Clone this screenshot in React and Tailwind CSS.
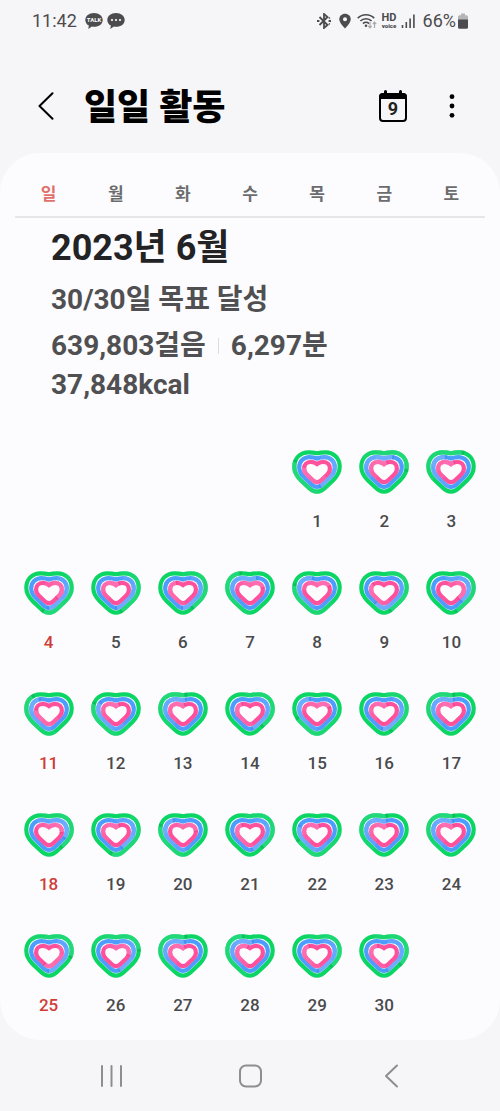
import React, { useState } from 'react';

const WEEKDAYS = ['일', '월', '화', '수', '목', '금', '토'];

// end point of each ring, in percent of the heart outline: [steps, active time, calories]
const ACTIVITY = [
  [80, 46, 78], [25, 8, 4], [8, 94, 4],
  [54, 50, 36], [45, 49, 4], [41, 50, 90], [92, 6, 20], [78, 95, 18], [44, 59, 84], [45, 37, 37],
  [87, 90, 77], [80, 83, 4], [1, 2, 2], [38, 47, 88], [68, 92, 18], [43, 51, 4], [1, 2, 3],
  [38, 30, 24], [53, 43, 4], [79, 90, 22], [38, 47, 88], [67, 80, 3], [1, 2, 4], [1, 1, 3],
  [27, 50, 56], [22, 46, 26], [1, 1, 2], [94, 2, 96], [36, 48, 88], [34, 46, 90],
];

const FIRST_WEEKDAY = 4;

const RINGS = [
  {
    d: 'M25 3.3C28 2.5 31 2.3 33.5 2.3C42 2.3 47.7 8.4 47.7 16.6C47.7 22.4 45.2 26.4 41.2 30.2L34 37C30.8 40.2 28.6 41.7 25 41.7C21.4 41.7 19.2 40.2 16 37L8.8 30.2C4.8 26.4 2.3 22.4 2.3 16.6C2.3 8.4 8 2.3 16.5 2.3C19 2.3 22 2.5 25 3.3Z',
    base: '#0bd563',
    light: '#2bdb83',
    dark: '#08a552',
  },
  {
    d: 'M25 8.5C27.5 7.4 30 7.1 32.3 7.1C38.6 7.1 42.8 11.6 42.8 17.3C42.8 21.3 41 24.3 38.4 26.8L31.2 33.7C29 35.9 27.4 36.9 25 36.9C22.6 36.9 21 35.9 18.8 33.7L11.6 26.8C9 24.3 7.2 21.3 7.2 17.3C7.2 11.6 11.4 7.1 17.7 7.1C20 7.1 22.5 7.4 25 8.5Z',
    base: '#4d9dff',
    light: '#79b2ff',
    dark: '#3a80dd',
  },
  {
    d: 'M25 14C27 12.4 29 11.9 31 11.9C35.2 11.9 37.9 14.9 37.9 18.4C37.9 21 36.9 22.9 35 24.7L29.2 30.2C27.6 31.7 26.6 32.2 25 32.2C23.4 32.2 22.4 31.7 20.8 30.2L15 24.7C13.1 22.9 12.1 21 12.1 18.4C12.1 14.9 14.8 11.9 19 11.9C21 11.9 23 12.4 25 14Z',
    base: '#ff509c',
    light: '#ff78b8',
    dark: '#d93a86',
  },
];

function Ring({ ring, end }) {
  const arc = (length) => ({
    d: ring.d,
    pathLength: 100,
    strokeDasharray: `${length} ${100 - length}`,
    strokeDashoffset: length - end,
  });

  return (
    <g fill="none" strokeWidth="4.2">
      <path d={ring.d} stroke={ring.base} />
      <path {...arc(42)} stroke={ring.light} opacity="0.35" />
      <path {...arc(30)} stroke={ring.light} opacity="0.35" />
      <path {...arc(16)} stroke={ring.light} opacity="0.4" />
      <path
        d={ring.d}
        pathLength="100"
        stroke={ring.dark}
        strokeDasharray="2 98"
        strokeDashoffset={-end}
        opacity="0.4"
      />
    </g>
  );
}

function ActivityHeart({ values }) {
  return (
    <svg className="w-[50px] h-11" viewBox="0 0 50 44" aria-hidden="true">
      {RINGS.map((ring, i) => (
        <Ring key={ring.base} ring={ring} end={values[i]} />
      ))}
    </svg>
  );
}

function StatusBar() {
  return (
    <div className="flex items-center justify-between h-[42px] px-8 text-[18px] leading-6 text-[#4c4c4e]">
      <div className="flex items-center gap-1">
        <span className="mr-1">11:42</span>
        <svg className="w-[18px] h-4" viewBox="0 0 18 16">
          <path d="M9 0C4 0 .3 3 .3 6.9c0 2.4 1.4 4.5 3.6 5.7L3.2 16l3.7-2.4c.7.1 1.4.2 2.1.2 5 0 8.7-3 8.7-6.9S14 0 9 0z" fill="currentColor" />
          <text x="9" y="9" textAnchor="middle" fontSize="6" fontWeight="700" fill="#fff">TALK</text>
        </svg>
        <svg className="w-[18px] h-4" viewBox="0 0 18 16">
          <path d="M9 0C4 0 .3 3 .3 6.9c0 2.4 1.4 4.5 3.6 5.7L3.2 16l3.7-2.4c.7.1 1.4.2 2.1.2 5 0 8.7-3 8.7-6.9S14 0 9 0z" fill="currentColor" />
          <g fill="#fff">
            <circle cx="5" cy="7" r="1.1" />
            <circle cx="9" cy="7" r="1.1" />
            <circle cx="13" cy="7" r="1.1" />
          </g>
        </svg>
      </div>
      <div className="flex items-center gap-1">
        <svg className="w-[14px] h-4" viewBox="0 0 14 16" fill="none" stroke="currentColor" strokeWidth="1.8">
          <path d="M2.5 4l8 8L7 15V1l3.5 3-8 8" />
          <path d="M0 8h2.4M11.6 8H14M11.8 5.4l1-.8M11.8 10.6l1 .8" />
        </svg>
        <svg className="w-3 h-4 ml-1" viewBox="0 0 12 16">
          <path d="M6 .8C2.8.8.3 3.2.3 6.2.3 10.2 6 15.4 6 15.4s5.7-5.2 5.7-9.2C11.7 3.2 9.2.8 6 .8z" fill="currentColor" />
          <circle cx="6" cy="6.2" r="2" fill="#f6f6f8" />
        </svg>
        <svg className="w-5 h-4 ml-[2px]" viewBox="0 0 20 16" fill="none" stroke="currentColor" strokeWidth="1.7">
          <path d="M.8 5.2C5.3.6 12.7.6 17.2 5.2M3.4 8C6.4 5 11.6 5 14.6 8M6 10.6C7.7 9 10.3 9 12 10.6" />
          <circle cx="9" cy="12.8" r="1.3" fill="currentColor" stroke="none" />
          <path d="M13 9v5.5M11.3 13l1.7 1.8 1.7-1.8M17.5 15V9.3M15.8 11l1.7-1.8 1.7 1.8" stroke="#aaaaac" strokeWidth="1.2" />
        </svg>
        <svg className="w-4 h-5" viewBox="0 0 16 20" fill="currentColor">
          <text x="8" y="10" textAnchor="middle" fontSize="11" fontWeight="700">HD</text>
          <text x="8" y="17" textAnchor="middle" fontSize="6" fontWeight="900">voice</text>
        </svg>
        <svg className="w-[14px] h-4" viewBox="0 0 14 16" fill="none" stroke="currentColor" strokeWidth="1.6">
          <path d="M1.5 15v-3M5.3 15V9M9.1 15V5.5M12.9 15V1.5" />
        </svg>
        <span className="ml-1">66%</span>
        <svg className="w-[10px] h-4 -ml-[2px]" viewBox="0 0 10 16">
          <path d="M3 .5h4v1.8h1.5A1.5 1.5 0 0110 3.8V7H0V3.8a1.5 1.5 0 011.5-1.500H3z" fill="#b5b5b7" />
          <path d="M0 6.5h10v7.7a1.5 1.5 0 01-1.5 1.5h-7A1.5 1.5 0 010 14.2z" fill="currentColor" />
        </svg>
      </div>
    </div>
  );
}

function Header() {
  return (
    <header className="flex items-center h-[111px] pt-4 pl-8 pr-9 text-black">
      <button aria-label="뒤로" className="p-1">
        <svg className="w-5 h-7" viewBox="0 0 20 28" fill="none" stroke="currentColor" strokeWidth="2" strokeLinecap="round" strokeLinejoin="round">
          <path d="M16.5 1.2L3.5 14l13 12.8" />
        </svg>
      </button>
      <h1 className="flex-1 ml-6 pt-1 text-[36px] leading-10 font-black">일일 활동</h1>
      <button aria-label="오늘" className="mr-8">
        <svg className="w-[30px] h-8" viewBox="0 0 30 32">
          <rect x="2" y="4.5" width="26" height="26.5" rx="3" fill="none" stroke="currentColor" strokeWidth="2" />
          <path d="M1 9V6.5a3.5 3.5 0 013.5-3.5H6V1.5a1.5 1.5 0 013 0V3h12V1.5a1.5 1.5 0 013 0V3h1.5A3.5 3.5 0 0129 6.5V9z" fill="currentColor" />
          <text x="15" y="25" textAnchor="middle" fontSize="18" fontWeight="700" fill="#222">9</text>
        </svg>
      </button>
      <button aria-label="더보기" className="px-2">
        <svg className="w-[8px] h-6" viewBox="0 0 8 24" fill="currentColor">
          <circle cx="4" cy="2.7" r="2.4" />
          <circle cx="4" cy="12" r="2.4" />
          <circle cx="4" cy="21.3" r="2.4" />
        </svg>
      </button>
    </header>
  );
}

function MonthSummary() {
  return (
    <div className="pl-9 pt-2 pb-6 text-left text-[28px] font-bold text-[#505052]">
      <h2 className="text-[36px] leading-[44px] text-[#232325]">2023년 6월</h2>
      <p className="mt-[10px] leading-10">30/30일 목표 달성</p>
      <div className="mt-[6px] flex flex-wrap items-center leading-[39px]">
        <span>639,803걸음</span>
        <span className="w-px h-4 mx-3 bg-[#dcdcde]" />
        <span>6,297분</span>
      </div>
      <p className="leading-[39px]">37,848kcal</p>
    </div>
  );
}

function DayCell({ day, weekday, selected, onSelect }) {
  if (!day) return <td />;

  return (
    <td className="p-0 align-top">
      <button
        onClick={() => onSelect(day)}
        aria-pressed={selected}
        className="flex flex-col items-center w-full h-[121px] pt-[22px]"
      >
        <ActivityHeart values={ACTIVITY[day - 1]} />
        <span
          className={`mt-[15px] text-[17px] leading-6 font-medium ${
            weekday === 0 ? 'text-[#d03c38]' : 'text-[#4a4a4c]'
          }`}
        >
          {day}
        </span>
      </button>
    </td>
  );
}

function Calendar() {
  const [selectedDay, setSelectedDay] = useState(null);

  const weeks = [0, 1, 2, 3, 4].map((week) =>
    WEEKDAYS.map((_, weekday) => {
      const day = week * 7 + weekday - FIRST_WEEKDAY + 1;
      return day >= 1 && day <= ACTIVITY.length ? day : null;
    })
  );

  return (
    <main className="flex-1 rounded-[40px] bg-[#fcfcfe] px-[15px] pt-[18px]">
      <table className="w-full table-fixed border-collapse">
        <thead>
          <tr className="border-b-2 border-[#e6e6e8]">
            {WEEKDAYS.map((name, i) => (
              <th
                key={name}
                scope="col"
                className={`h-[46px] p-0 text-[17px] leading-6 font-bold ${
                  i === 0 ? 'text-[#e0706c]' : 'text-[#6c6c6e]'
                }`}
              >
                {name}
              </th>
            ))}
          </tr>
        </thead>
        <tbody>
          <tr>
            <td colSpan={7} className="p-0">
              <MonthSummary />
            </td>
          </tr>
          {weeks.map((week, i) => (
            <tr key={i}>
              {week.map((day, weekday) => (
                <DayCell
                  key={weekday}
                  day={day}
                  weekday={weekday}
                  selected={day !== null && day === selectedDay}
                  onSelect={setSelectedDay}
                />
              ))}
            </tr>
          ))}
        </tbody>
      </table>
    </main>
  );
}

function NavigationBar() {
  return (
    <nav className="flex items-center justify-around h-[71px] px-[41px] text-[#8e8e90]">
      <button aria-label="최근 앱">
        <svg className="w-6 h-6" viewBox="0 0 24 24" fill="none" stroke="currentColor" strokeWidth="2" strokeLinecap="round">
          <path d="M3 2v20M12.5 2v20M22 2v20" />
        </svg>
      </button>
      <button aria-label="홈">
        <svg className="w-6 h-6" viewBox="0 0 24 24" fill="none" stroke="currentColor" strokeWidth="2">
          <rect x="2" y="1.5" width="21" height="21" rx="6" />
        </svg>
      </button>
      <button aria-label="뒤로">
        <svg className="w-6 h-6" viewBox="0 0 24 24" fill="none" stroke="currentColor" strokeWidth="2" strokeLinecap="round" strokeLinejoin="round">
          <path d="M20 1.5L9 12l11 10.5" />
        </svg>
      </button>
    </nav>
  );
}

export default function App() {
  return (
    <div className="min-h-screen flex flex-col bg-[#f6f6f8] font-[Roboto,'Noto_Sans_CJK_KR',sans-serif]">
      <StatusBar />
      <Header />
      <Calendar />
      <NavigationBar />
    </div>
  );
}
